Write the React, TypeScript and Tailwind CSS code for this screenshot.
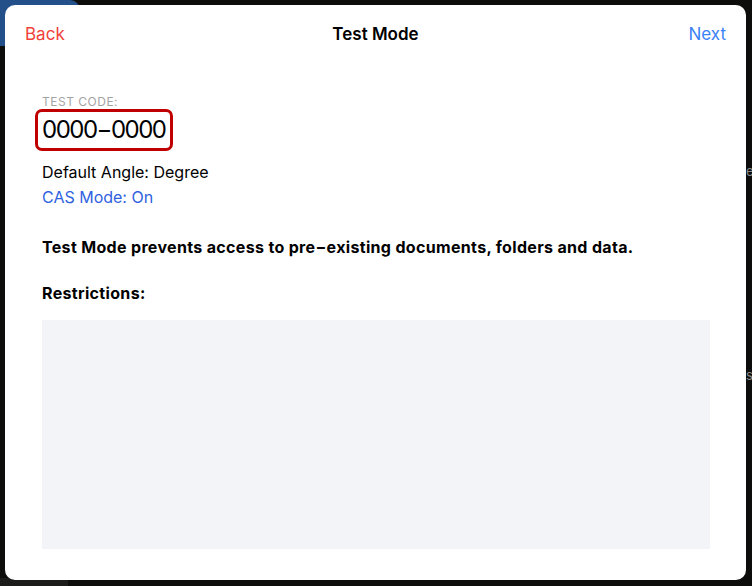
export default function App() {
  return (
    <div
      className="relative h-[586px] w-[752px] overflow-hidden bg-[#0d0e0b]"
      style={{ fontFamily: "Inter, 'Liberation Sans', sans-serif" }}
    >
      {/* bits of the screen behind the sheet */}
      <div className="absolute left-0 top-0 h-[46px] w-[80px] rounded-tr-[10px] bg-[#24508a]" />
      <div className="absolute bottom-0 left-0 h-[8px] w-[68px] bg-[#1c1d1a]" />
      <span className="absolute left-[746px] top-[162px] text-[13px] text-[#8a8a8a]">e</span>
      <span className="absolute left-[746px] top-[366px] text-[13px] text-[#8a8a8a]">s</span>

      <div className="relative ml-[5px] mt-[5px] flex h-[575px] w-[741px] flex-col rounded-[10px] bg-white">
        <header className="grid h-[60px] grid-cols-3 items-center px-[20px] text-[17px]">
          <button type="button" className="justify-self-start text-[#f0413a]">
            Back
          </button>
          <h1 className="justify-self-center font-semibold text-black">Test Mode</h1>
          <button type="button" className="justify-self-end text-[#3a82f6]">
            Next
          </button>
        </header>

        <main className="flex flex-1 flex-col px-[37px] pt-[30px]">
          <p className="text-[12px] leading-[14px] tracking-[0.5px] text-[#a3a3a3]">TEST CODE:</p>
          <div className="-ml-[7px] mt-[0px] w-fit rounded-[7px] border-[3px] border-[#c00000] px-[4px] py-[2px]">
            <span className="block text-[24px] leading-[32px] tracking-[-1.5px] text-black">0000−0000</span>
          </div>

          <p className="mt-[9px] text-[16px] leading-[25px] text-black">Default Angle: Degree</p>
          <p className="text-[16px] leading-[25px] text-[#2f62e0]">CAS Mode: On</p>

          <p className="mt-[25px] text-[16px] font-bold leading-[24px] tracking-[0.33px] text-black">
            Test Mode prevents access to pre−existing documents, folders and data.
          </p>
          <p className="mt-[22px] text-[16px] font-bold leading-[24px] tracking-[0.33px] text-black">
            Restrictions:
          </p>

          <div className="mb-[31px] mr-[-1px] mt-[15px] flex-1 bg-[#f3f4f8]" />
        </main>
      </div>
    </div>
  );
}
